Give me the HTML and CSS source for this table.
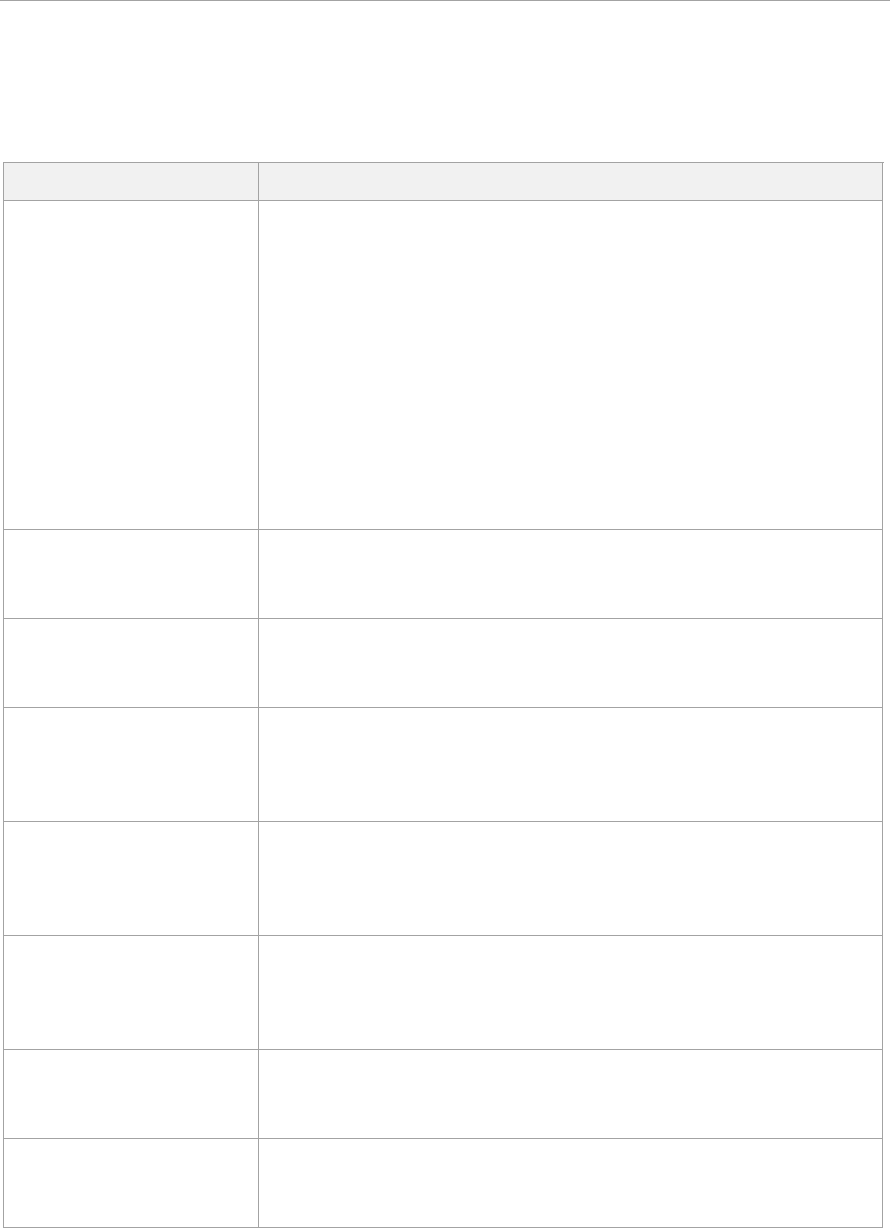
FILE: index.html
```html
<!DOCTYPE html>
<html lang="en">
<head>
<meta charset="utf-8">
<title>Table</title>
<link rel="stylesheet" href="styles.css">
</head>
<body>
<div class="page">
  <div class="grid">
    <div class="cell head h-head"></div>
    <div class="cell head h-head"></div>
    <div class="cell h-xl"></div>
    <div class="cell h-xl"></div>
    <div class="cell h-s"></div>
    <div class="cell h-s"></div>
    <div class="cell h-s"></div>
    <div class="cell h-s"></div>
    <div class="cell h-m"></div>
    <div class="cell h-m"></div>
    <div class="cell h-m"></div>
    <div class="cell h-m"></div>
    <div class="cell h-m"></div>
    <div class="cell h-m"></div>
    <div class="cell h-s"></div>
    <div class="cell h-s"></div>
    <div class="cell h-s"></div>
    <div class="cell h-s"></div>
  </div>
</div>
</body>
</html>
```

FILE: styles.css
```css
html, body {
  margin: 0;
  padding: 0;
  background: #ffffff;
  font-family: "Liberation Sans", Arial, sans-serif;
}

.page {
  border-top: 1px solid #a3a3a3;
  padding: 161px 0 0 3px;
}

.grid {
  display: grid;
  grid-template-columns: 255px 624px;
  width: 880px;
  border-top: 1px solid #a3a3a3;
  border-left: 1px solid #a3a3a3;
}

.cell {
  box-sizing: border-box;
  border-right: 1px solid #a3a3a3;
  border-bottom: 1px solid #a3a3a3;
}

.head {
  background: #f1f1f1;
}

.h-head { height: 38px; }
.h-xl { height: 329px; }
.h-s { height: 89px; }
.h-m { height: 114px; }
```
